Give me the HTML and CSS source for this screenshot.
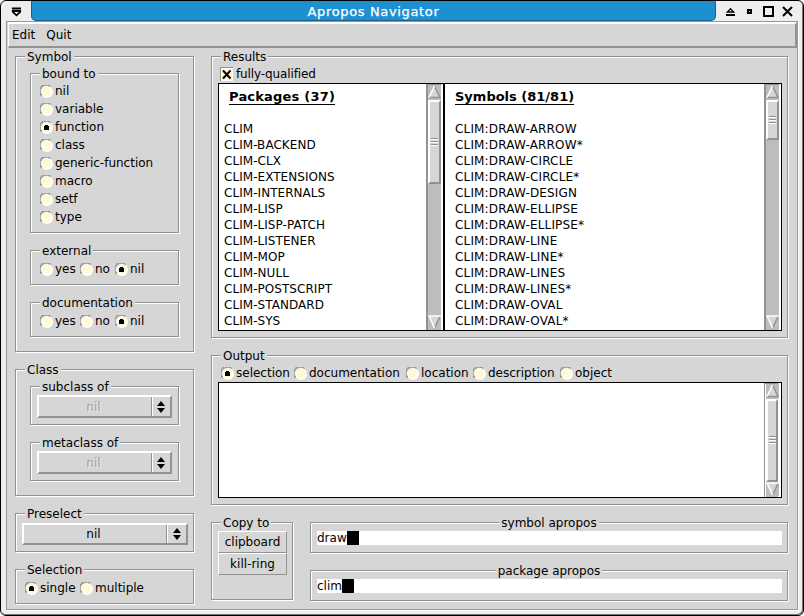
FILE: index.html
```
<!DOCTYPE html>
<html lang="en">
<head>
<meta charset="utf-8">
<title>Apropos Navigator</title>
<link rel="stylesheet" href="styles.css">
</head>
<body>
<svg class="defs" width="0" height="0" aria-hidden="true">
  <defs>
    <g id="off">
      <circle cx="7" cy="7" r="6" fill="#fff"/>
      <path d="M1.600 10.500A6 6 0 0 1 10.500 1.600" fill="none" stroke="#929292" stroke-width="1.800" stroke-dasharray="2.600 .5"/>
      <circle cx="6.500" cy="6.500" r="4.800" fill="#fffad2"/>
    </g>
    <g id="on"><use href="#off"/><path d="M5 4h3v1h1v4H4V5h1z" fill="#000"/></g>
    <g id="updown"><path d="M4 0l4 5H0zM0 7h8l-4 5z" fill="#000"/></g>
    <g id="arrow-up">
      <path d="M0 0h13v14H0z" fill="#bdbdbd"/><path d="M6.500 1L12 12.500H1z" fill="#d6d6d6"/>
      <path d="M6.500 1L12 12.500H1" fill="none" stroke="#929292" stroke-width="1.500"/><path d="M1 12.500L6.500 1" stroke="#fff" stroke-width="1.500"/>
    </g>
    <g id="arrow-down">
      <path d="M0 0h13v14H0z" fill="#bdbdbd"/><path d="M1 1.500h11L6.500 13z" fill="#d6d6d6"/>
      <path d="M12 1.500L6.500 13" stroke="#929292" stroke-width="1.500"/><path d="M13 1H1l5.500 12" fill="none" stroke="#fff" stroke-width="1.500"/>
    </g>
  </defs>
</svg>
<div class="window">
  <header class="titlebar">
    <svg class="menu-icon" width="31" height="21" viewBox="0 0 31 21"><path d="M12 7.500h9v2h-9z"/><path d="M12.800 11h7.400v.8L16.500 15.300 12.800 11.800z" fill="none" stroke="#000" stroke-width="1.800"/></svg>
    <h1>Apropos Navigator</h1>
    <svg class="controls" width="87" height="21" viewBox="0 0 87 21">
      <path d="M10 14h9v2h-9z"/><path d="M11.300 12h6.400l-3.200-3.400z" fill="none" stroke="#000" stroke-width="1.300"/>
      <path d="M32 10h3v3h-3z" fill="none" stroke="#000" stroke-width="2"/>
      <path d="M48 7h9v9h-9z" fill="none" stroke="#000" stroke-width="2"/>
      <path d="M67 7l9 9M76 7l-9 9" stroke="#000" stroke-width="2"/>
    </svg>
  </header>
  <main class="client">
    <nav class="menubar"><span>Edit</span><span>Quit</span></nav>
    <div class="columns">
      <div class="left">
        <section class="frame symbol">
          <h2>Symbol</h2>
          <section class="frame bound">
            <h2>bound to</h2>
            <div class="options stack">
              <label><svg><use href="#off"/></svg>nil</label>
              <label><svg><use href="#off"/></svg>variable</label>
              <label><svg><use href="#on"/></svg>function</label>
              <label><svg><use href="#off"/></svg>class</label>
              <label><svg><use href="#off"/></svg>generic-function</label>
              <label><svg><use href="#off"/></svg>macro</label>
              <label><svg><use href="#off"/></svg>setf</label>
              <label><svg><use href="#off"/></svg>type</label>
            </div>
          </section>
          <section class="frame tri">
            <h2>external</h2>
            <div class="options three"><label><svg><use href="#off"/></svg>yes</label><label><svg><use href="#off"/></svg>no</label><label><svg><use href="#on"/></svg>nil</label></div>
          </section>
          <section class="frame tri">
            <h2>documentation</h2>
            <div class="options three"><label><svg><use href="#off"/></svg>yes</label><label><svg><use href="#off"/></svg>no</label><label><svg><use href="#on"/></svg>nil</label></div>
          </section>
        </section>
        <section class="frame class">
          <h2>Class</h2>
          <section class="frame pick">
            <h2>subclass of</h2>
            <div class="select disabled"><span>nil</span><i><svg width="8" height="12"><use href="#updown"/></svg></i></div>
          </section>
          <section class="frame pick">
            <h2>metaclass of</h2>
            <div class="select disabled"><span>nil</span><i><svg width="8" height="12"><use href="#updown"/></svg></i></div>
          </section>
        </section>
        <section class="frame preselect">
          <h2>Preselect</h2>
          <div class="select"><span>nil</span><i><svg width="8" height="12"><use href="#updown"/></svg></i></div>
        </section>
        <section class="frame selection">
          <h2>Selection</h2>
          <div class="options two"><label><svg><use href="#on"/></svg>single</label><label><svg><use href="#off"/></svg>multiple</label></div>
        </section>
      </div>
      <div class="right">
        <section class="frame results">
          <h2>Results</h2>
          <div class="check"><svg width="13" height="14"><path d="M0 0h13v14H0z" fill="#fff"/><path d="M0 0h13v1H1v13H0z" fill="#929292"/><path d="M2 2h10v11H2z" fill="#fffad2"/><path d="M3 3.500l7.500 8M10.500 3.500l-7.500 8" stroke="#000" stroke-width="2"/></svg>fully-qualified</div>
          <div class="panes">
            <div class="pane packages">
              <div class="text"><h3>Packages (37)</h3>
<pre>CLIM
CLIM-BACKEND
CLIM-CLX
CLIM-EXTENSIONS
CLIM-INTERNALS
CLIM-LISP
CLIM-LISP-PATCH
CLIM-LISTENER
CLIM-MOP
CLIM-NULL
CLIM-POSTSCRIPT
CLIM-STANDARD
CLIM-SYS</pre></div>
              <div class="scrollbar"><svg width="13" height="14"><use href="#arrow-up"/></svg><div class="thumb t1"><b></b></div><svg class="end" width="13" height="14"><use href="#arrow-down"/></svg></div>
            </div>
            <div class="pane symbols">
              <div class="text"><h3>Symbols (81/81)</h3>
<pre>CLIM:DRAW-ARROW
CLIM:DRAW-ARROW*
CLIM:DRAW-CIRCLE
CLIM:DRAW-CIRCLE*
CLIM:DRAW-DESIGN
CLIM:DRAW-ELLIPSE
CLIM:DRAW-ELLIPSE*
CLIM:DRAW-LINE
CLIM:DRAW-LINE*
CLIM:DRAW-LINES
CLIM:DRAW-LINES*
CLIM:DRAW-OVAL
CLIM:DRAW-OVAL*</pre></div>
              <div class="scrollbar"><svg width="13" height="14"><use href="#arrow-up"/></svg><div class="thumb t2"><b></b></div><svg class="end" width="13" height="14"><use href="#arrow-down"/></svg></div>
            </div>
          </div>
        </section>
        <section class="frame output">
          <h2>Output</h2>
          <div class="options five"><label><svg><use href="#on"/></svg>selection</label><label><svg><use href="#off"/></svg>documentation</label><label><svg><use href="#off"/></svg>location</label><label><svg><use href="#off"/></svg>description</label><label><svg><use href="#off"/></svg>object</label></div>
          <div class="pane log">
            <div class="text"></div>
            <div class="scrollbar"><svg width="13" height="14"><use href="#arrow-up"/></svg><div class="thumb t3"><b></b></div><svg class="end" width="13" height="14"><use href="#arrow-down"/></svg></div>
          </div>
        </section>
        <div class="bottom">
          <section class="frame copy">
            <h2>Copy to</h2>
            <button>clipboard</button>
            <button>kill-ring</button>
          </section>
          <div class="fields">
            <section class="frame field"><h2>symbol apropos</h2><div class="input">draw<b></b></div></section>
            <section class="frame field"><h2>package apropos</h2><div class="input">clim<b></b></div></section>
          </div>
        </div>
      </div>
    </div>
  </main>
</div>
</body>
</html>
```
FILE: styles.css
```
* { box-sizing: border-box; }
body { margin: 0; background: #fff; font: 12px/18px "DejaVu Sans", sans-serif; color: #000; overflow: hidden; }
h1, h2, h3, pre { margin: 0; font: inherit; }
svg { display: block; flex: none; }
.defs { position: absolute; }

/* window chrome */
.window { width: 804px; height: 616px; border: 1px solid #000; border-radius: 6px; background: #eee; box-shadow: inset -1px -1px 0 #777; overflow: hidden; }
.titlebar { display: flex; height: 20px; }
.titlebar svg { margin-top: -1px; }
.menu-icon { margin-left: -1px; }
.titlebar h1 { flex: 1; height: 20px; background: #1e90d0; border: solid #17618e; border-width: 0 1px 1px; border-radius: 0 0 5px 5px; color: #fff; font-size: 13px; line-height: 22px; letter-spacing: .65px; text-align: center; -webkit-text-stroke: .25px #fff; }
.client { width: 792px; height: 589px; margin: 0 0 0 5px; border: 1px solid #999; background: #d6d6d6; box-shadow: 1px 1px 0 #fff; }
.menubar { display: flex; gap: 11px; height: 26px; padding: 2px 0 0 3px; margin-left: 1px; border: 2px solid #fff; border-width: 2px 2px 2px 1px; border-right-color: #929292; border-bottom-color: #929292; }

/* etched frames */
.frame { border: 1px solid #929292; box-shadow: 1px 1px 0 #fff, inset 1px 1px 0 #fff; }
.frame > h2 { width: max-content; height: 18px; margin: -9px 0 0 9px; padding: 0 2px; background: #d6d6d6; }
.columns { display: flex; gap: 17px; padding: 8px 0 0 8px; }
.left { width: 179px; }
.right { width: 577px; }
.symbol { height: 296px; }
.bound { height: 160px; width: 149px; margin: 7px 0 0 14px; }
.tri { height: 35px; width: 149px; margin: 17px 0 0 14px; }
.class { height: 127px; margin-top: 17px; }
.pick { height: 39px; width: 149px; margin: 7px 0 0 14px; }
.pick + .pick { margin-top: 17px; }
.preselect { height: 39px; margin-top: 17px; }
.selection { height: 35px; margin-top: 17px; }

/* radio buttons */
.options { display: grid; padding-left: 9px; white-space: nowrap; }
.three { grid-template-columns: 40px 35px 1fr; }
.two { grid-template-columns: 55px 1fr; }
.five { grid-template-columns: 73px 112px 67px 87px 1fr; margin-top: -1px; }
.stack { margin-top: -1px; }
.options label { display: flex; align-items: center; gap: 2px; height: 18px; }
.options label svg { width: 13px; height: 13px; }

/* option menus */
.select { display: flex; width: 135px; height: 23px; margin: -1px 0 0 6px; border: 2px solid #fff; border-right-color: #929292; border-bottom-color: #929292; }
.preselect .select { width: 166px; height: 22px; margin-top: 0; }
.select span { flex: 1; line-height: 20px; padding-right: 3px; text-align: center; }
.preselect .select span { line-height: 19px; }
.select i { width: 19px; border-left: 1px solid #929292; box-shadow: inset 1px 0 0 #fff; padding: 4px 0 0 5px; }
.preselect .select i { width: 20px; padding-top: 3px; padding-left: 6px; }
.disabled span { color: #a0a0a0; text-shadow: 1px 1px 0 #eee; }

/* list panes */
.results { height: 282px; }
.check { display: flex; align-items: center; gap: 3px; height: 18px; margin-top: -1px; padding-left: 8px; letter-spacing: -.12px; }
.panes { display: flex; width: 564px; height: 248px; margin-left: 6px; }
.pane { display: flex; border: 1px solid #000; background: #fff; }
.packages { width: 226px; }
.symbols { flex: 1; }
.pane .text { flex: 1; }
.packages .text { padding-left: 5px; }
.symbols .text { padding-left: 10px; }
.pane h3 { width: max-content; height: 16px; margin: 5px 0 16px; line-height: 16px; font-size: 13px; font-weight: bold; border-bottom: 1px solid #000; }
.packages h3 { margin-left: 5px; letter-spacing: .2px; }
.pane pre { font: 12px/16px "DejaVu Sans", sans-serif; letter-spacing: .05px; }
.symbols pre { letter-spacing: .16px; }

/* scroll bars */
.scrollbar { display: flex; flex-direction: column; width: 16px; margin-right: 1px; padding: 0 0 1px 1px; background: #bdbdbd; border-left: 1px solid #929292; border-top: 1px solid #929292; border-right: 1px solid #fff; box-shadow: inset 1px 0 0 #929292; }
.thumb { display: flex; align-items: center; justify-content: center; width: 13px; margin-top: 1px; border: 2px solid #fff; border-right-color: #929292; border-bottom-color: #929292; background: #d6d6d6; }
.thumb b { width: 7px; height: 9px; background: repeating-linear-gradient(#929292 0 1px, #fff 1px 2px, #d6d6d6 2px 3px); }
.t1 { height: 84px; }
.t2 { height: 40px; }
.t3 { height: 83px; }
.scrollbar .end { margin-top: auto; }

/* output */
.output { height: 150px; margin-top: 17px; }
.log { width: 564px; height: 116px; margin-left: 6px; }
.log .text + .scrollbar { width: 15px; margin-right: 2px; box-shadow: inset 1px 0 0 #fff; }
.log .thumb { width: 12px; }

/* copy buttons and entry fields */
.bottom { display: flex; gap: 17px; margin-top: 17px; }
.copy { width: 82px; height: 78px; }
.copy button { display: block; width: 69px; height: 22px; margin: 0 0 0 6px; padding: 0; border: 1px solid #fff; border-right-color: #929292; border-bottom-color: #929292; border-radius: 0; background: #d6d6d6; font: 12px/18px "DejaVu Sans", sans-serif; color: #000; }
.copy h2 + button { margin-top: -1px; }
.fields { flex: 1; }
.field { height: 31px; }
.field + .field { margin-top: 17px; }
.field > h2 { margin-left: auto; margin-right: auto; }
.input { display: flex; height: 14px; margin: -1px 5px 0 6px; background: #fff; line-height: 14px; }
.input b { width: 12px; background: #000; }
```
